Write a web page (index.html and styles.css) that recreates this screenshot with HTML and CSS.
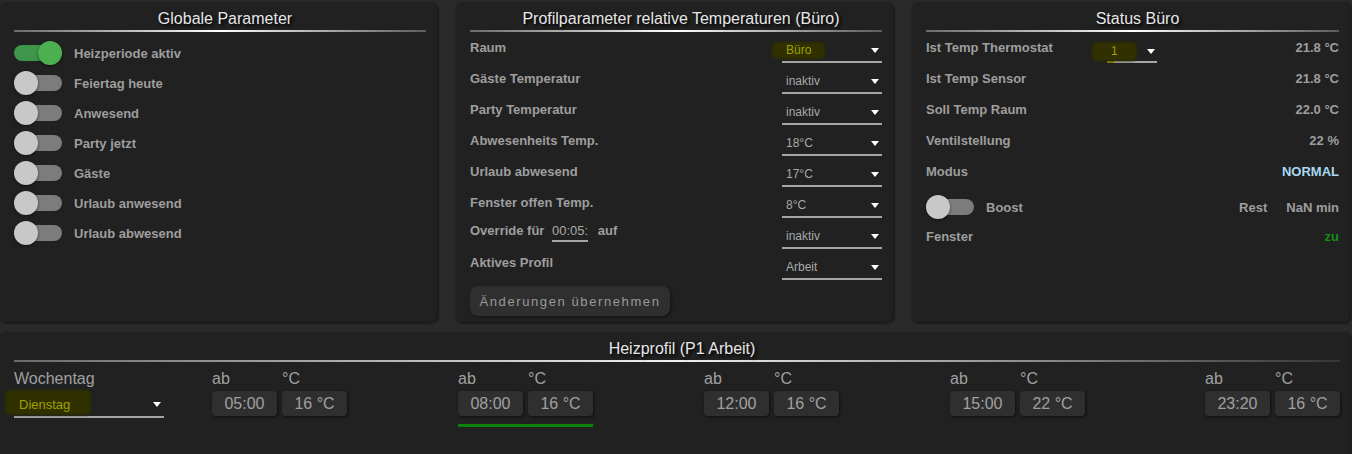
FILE: index.html
```html
<!DOCTYPE html>
<html lang="de">
<head>
    <meta charset="UTF-8">
    <meta name="viewport" content="width=device-width, initial-scale=1.0">
    <title>Heizung Büro</title>
    <link rel="stylesheet" href="styles.css">
</head>
<body>
    <div class="top-row">
        <section class="card">
            <h2 class="card-title">Globale Parameter</h2>
            <div class="switch-list">
                <div class="switch-row"><span class="switch on"></span><span class="label">Heizperiode aktiv</span></div>
                <div class="switch-row"><span class="switch"></span><span class="label">Feiertag heute</span></div>
                <div class="switch-row"><span class="switch"></span><span class="label">Anwesend</span></div>
                <div class="switch-row"><span class="switch"></span><span class="label">Party jetzt</span></div>
                <div class="switch-row"><span class="switch"></span><span class="label">Gäste</span></div>
                <div class="switch-row"><span class="switch"></span><span class="label">Urlaub anwesend</span></div>
                <div class="switch-row"><span class="switch"></span><span class="label">Urlaub abwesend</span></div>
            </div>
        </section>

        <section class="card">
            <h2 class="card-title">Profilparameter relative Temperaturen (Büro)</h2>
            <div class="param-row">
                <span class="label">Raum</span>
                <div class="select"><span class="marked">Büro</span><span class="arrow"></span></div>
            </div>
            <div class="param-row">
                <span class="label">Gäste Temperatur</span>
                <div class="select"><span>inaktiv</span><span class="arrow"></span></div>
            </div>
            <div class="param-row">
                <span class="label">Party Temperatur</span>
                <div class="select"><span>inaktiv</span><span class="arrow"></span></div>
            </div>
            <div class="param-row">
                <span class="label">Abwesenheits Temp.</span>
                <div class="select"><span>18°C</span><span class="arrow"></span></div>
            </div>
            <div class="param-row">
                <span class="label">Urlaub abwesend</span>
                <div class="select"><span>17°C</span><span class="arrow"></span></div>
            </div>
            <div class="param-row">
                <span class="label">Fenster offen Temp.</span>
                <div class="select"><span>8°C</span><span class="arrow"></span></div>
            </div>
            <div class="param-row">
                <span class="label override">Override für <span class="time-input">00:05:</span> auf</span>
                <div class="select"><span>inaktiv</span><span class="arrow"></span></div>
            </div>
            <div class="param-row">
                <span class="label raised">Aktives Profil</span>
                <div class="select"><span>Arbeit</span><span class="arrow"></span></div>
            </div>
            <button class="apply-btn">Änderungen übernehmen</button>
        </section>

        <section class="card">
            <h2 class="card-title">Status Büro</h2>
            <div class="param-row">
                <span class="label thermo-label">Ist Temp Thermostat</span>
                <div class="select small-select"><span class="marked wide">1</span><span class="arrow"></span></div>
                <span class="reading">21.8 °C</span>
            </div>
            <div class="param-row">
                <span class="label">Ist Temp Sensor</span>
                <span class="reading">21.8 °C</span>
            </div>
            <div class="param-row">
                <span class="label">Soll Temp Raum</span>
                <span class="reading">22.0 °C</span>
            </div>
            <div class="param-row">
                <span class="label">Ventilstellung</span>
                <span class="reading">22 %</span>
            </div>
            <div class="param-row">
                <span class="label">Modus</span>
                <span class="reading mode">NORMAL</span>
            </div>
            <div class="boost-row">
                <span class="switch"></span>
                <span class="label">Boost</span>
                <span class="label rest">Rest</span>
                <span class="label">NaN min</span>
            </div>
            <div class="param-row window-row">
                <span class="label">Fenster</span>
                <span class="reading closed">zu</span>
            </div>
        </section>
    </div>

    <section class="card profile">
        <h2 class="card-title">Heizprofil (P1 Arbeit)</h2>
        <div class="profile-grid">
            <div class="weekday">
                <div class="field-label">Wochentag</div>
                <div class="select day-select"><span class="marked day">Dienstag</span><span class="arrow"></span></div>
            </div>
            <div class="slot">
                <span class="field-label">ab</span><span class="field-label">°C</span>
                <span class="chip">05:00</span><span class="chip">16 °C</span>
            </div>
            <div class="slot">
                <span class="field-label">ab</span><span class="field-label">°C</span>
                <span class="chip">08:00</span><span class="chip">16 °C</span>
                <div class="slot-mark"></div>
            </div>
            <div class="slot">
                <span class="field-label">ab</span><span class="field-label">°C</span>
                <span class="chip">12:00</span><span class="chip">16 °C</span>
            </div>
            <div class="slot">
                <span class="field-label">ab</span><span class="field-label">°C</span>
                <span class="chip">15:00</span><span class="chip">22 °C</span>
            </div>
            <div class="slot last">
                <span class="field-label">ab</span><span class="field-label">°C</span>
                <span class="chip">23:20</span><span class="chip">16 °C</span>
            </div>
        </div>
    </section>
</body>
</html>
```

FILE: styles.css
```css
html {
    overflow: hidden;
}
body {
    margin: 0;
    padding-top: 2px;
    background-color: #2a2a2a;
    font-family: "Liberation Sans", Arial, sans-serif;
    color: #9e9e9e;
}
.top-row {
    display: grid;
    grid-template-columns: 437px 437px 438px;
    column-gap: 19px;
}
.card {
    background-color: #212121;
    border-radius: 6px;
    box-shadow: 1px 1px 3px rgba(0, 0, 0, 0.6);
    height: 320px;
    box-sizing: border-box;
    padding: 6px 11px 0 14px;
}
.card-title {
    margin: 0;
    padding-left: 10px;
    font-size: 16px;
    font-weight: normal;
    line-height: 22px;
    text-align: center;
    color: #e6e6e6;
    text-shadow: 2px 2px 3px #000;
    border-bottom: 2px solid #888;
    border-image: linear-gradient(to right, #6a6a6a, #fff 50%, #5a5a5a) 1;
}
.label {
    font-size: 13px;
    font-weight: bold;
    line-height: 15px;
    color: #9e9e9e;
}

/* switches */
.switch-list {
    margin-top: 6px;
}
.switch-row {
    display: flex;
    align-items: center;
    gap: 12px;
    height: 30px;
}
.switch {
    position: relative;
    flex: none;
    width: 48px;
    height: 24px;
}
.switch::before {
    content: "";
    position: absolute;
    left: 0;
    top: 4px;
    width: 48px;
    height: 16px;
    border-radius: 8px;
    background-color: #7c7c7c;
}
.switch::after {
    content: "";
    position: absolute;
    left: 0;
    top: 0;
    width: 24px;
    height: 24px;
    border-radius: 50%;
    background-color: #c8c8c8;
    box-shadow: 0 1px 3px rgba(0, 0, 0, 0.5);
}
.switch.on::before {
    background-color: #3f9549;
}
.switch.on::after {
    left: 24px;
    background-color: #4caf50;
}

/* parameter rows */
.param-row {
    display: flex;
    justify-content: space-between;
    align-items: flex-start;
    height: 31px;
}
.param-row .label,
.reading {
    padding-top: 8px;
}
.param-row .label.override {
    padding-top: 5px;
}
.param-row .label.raised {
    padding-top: 6px;
}
.time-input {
    display: inline-block;
    margin: 0 6px 0 4px;
    padding-bottom: 2px;
    border-bottom: 2px solid #a6a6a6;
    font-weight: normal;
    color: #a8a8a8;
}
.select {
    display: flex;
    align-items: center;
    width: 100px;
    height: 31px;
    box-sizing: border-box;
    padding: 7px 3px 0 4px;
    border-bottom: 2px solid #a6a6a6;
    font-size: 12px;
    line-height: 13px;
    color: #a8a8a8;
}
.arrow {
    margin-left: auto;
    width: 0;
    height: 0;
    border-left: 4px solid transparent;
    border-right: 4px solid transparent;
    border-top: 5px solid #fff;
}
.marked {
    margin-left: -12px;
    padding: 0 12px;
    border-radius: 3px;
    background-color: #313100;
    box-shadow: 0 0 3px 2px #313100;
    color: #a0a000;
}
.marked.wide {
    margin-left: -17px;
    padding: 1px 17px;
}
.apply-btn {
    margin-top: 6px;
    width: 200px;
    height: 30px;
    padding: 0;
    border: none;
    border-radius: 8px;
    background-color: #2f2f2f;
    box-shadow: 1px 1px 3px rgba(0, 0, 0, 0.5);
    font-family: inherit;
    font-size: 13px;
    letter-spacing: 1.6px;
    color: #9a9a9a;
}

/* status */
.thermo-label {
    width: 181px;
}
.small-select {
    width: 50px;
    padding-right: 2px;
    border-bottom: none;
    background: linear-gradient(to right, #8c8c00 7px, #a6a6a6 7px) left bottom / 100% 2px no-repeat;
}
.reading {
    margin-left: auto;
    font-size: 13px;
    font-weight: bold;
    line-height: 15px;
}
.reading.mode {
    color: #a8d8f2;
}
.reading.closed {
    color: #168c16;
}
.boost-row {
    display: flex;
    align-items: center;
    gap: 12px;
    height: 32px;
    margin-top: 4px;
}
.boost-row .rest {
    margin-left: auto;
    margin-right: 7px;
}
.window-row {
    margin-top: -2px;
}

/* heating profile */
.profile {
    width: 1350px;
    height: 130px;
    margin-top: 10px;
    padding-right: 10px;
}
.profile .card-title {
    border-image: linear-gradient(to right, #6a6a6a, #f0f0f0 50%, #353535) 1;
}
.profile-grid {
    display: grid;
    grid-template-columns: 198px repeat(4, 246px) 1fr;
    margin-top: 8px;
}
.field-label {
    font-size: 16px;
    line-height: 18px;
    color: #a0a0a0;
}
.day-select {
    width: 150px;
    height: 30px;
    padding: 4px 3px 0 5px;
    font-size: 13px;
}
.marked.day {
    margin-bottom: 4px;
    padding: 6px 19px 2px 12px;
}
.slot {
    display: grid;
    grid-template-columns: 65px 65px;
    column-gap: 5px;
    align-content: start;
}
.slot.last {
    justify-self: end;
}
.chip {
    margin-top: 3px;
    height: 25px;
    line-height: 25px;
    border-radius: 4px;
    background-color: #2f2f2f;
    box-shadow: 1px 1px 3px rgba(0, 0, 0, 0.6);
    text-align: center;
    font-size: 16px;
    color: #a0a0a0;
}
.slot-mark {
    grid-column: 1 / -1;
    height: 3px;
    margin-top: 8px;
    background-color: #0b800b;
}
```
